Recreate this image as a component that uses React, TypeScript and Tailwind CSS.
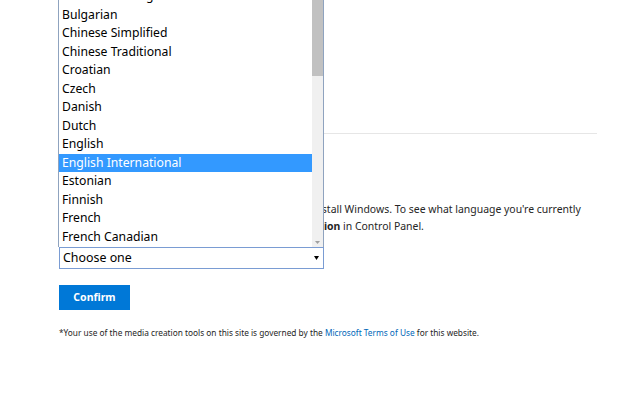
const languages = [
  'Brazilian Portuguese',
  'Bulgarian',
  'Chinese Simplified',
  'Chinese Traditional',
  'Croatian',
  'Czech',
  'Danish',
  'Dutch',
  'English',
  'English International',
  'Estonian',
  'Finnish',
  'French',
  'French Canadian',
]

const font = { fontFamily: '"Noto Sans", "Open Sans", sans-serif' }

export default function App() {
  return (
    <div className="h-[395px] w-[640px] overflow-hidden bg-white text-[#1a1a1a]" style={font}>
      <div className="ml-[59px] w-[538px]">
        {/* section above, mostly hidden behind the open list */}
        <div className="h-[133px]" />
        <div className="h-px bg-[#e6e6e6]" />
        <p className="mt-[67px] text-[10.45px] leading-[17px] whitespace-nowrap text-[#262626]">
          You&apos;ll need to choose the same language when you install Windows. To see what language you&apos;re currently
          <br />
          using, go to <b>Time and language</b> in PC settings or <b>Region</b> in Control Panel.
        </p>

        <div className="relative mt-[12px] w-[265px]">
          {/* open dropdown list */}
          <div className="absolute bottom-full left-[-1px] flex w-[266px] border-x border-[#8fa3bf] bg-white">
            <ul className="flex-1 pt-px pb-px">
              {languages.map((l) => (
                <li
                  key={l}
                  className={
                    l === 'English International'
                      ? 'h-[18.5px] pl-[3px] text-[12.2px] leading-[18.5px] text-white bg-[#3399ff]'
                      : 'h-[18.5px] pl-[3px] text-[12.2px] leading-[18.5px] text-black'
                  }
                >
                  {l}
                </li>
              ))}
            </ul>
            <div className="relative w-[11px] bg-[#f0f0f0]">
              <div className="absolute left-0 right-0 top-0 bottom-[171px] bg-[#c1c1c1]" />
              <svg className="absolute bottom-[3px] left-[3px]" width="5" height="3" viewBox="0 0 5 3">
                <path d="M0 0h5L2.5 3z" fill="#a0a0a0" />
              </svg>
            </div>
          </div>

          {/* closed select */}
          <div className="flex h-[22px] items-center justify-between border border-[#7a9cd3] bg-white pl-[3px] pr-[4px] text-[12.4px] text-black">
            <span>Choose one</span>
            <svg width="5" height="4" viewBox="0 0 5 4">
              <path d="M0 0h5L2.5 4z" fill="#000" />
            </svg>
          </div>
        </div>

        <button className="mt-[16px] h-[25px] w-[71px] bg-[#0078d7] text-[10.5px] font-bold text-white">
          Confirm
        </button>

        <p className="mt-[17px] text-[8.3px] leading-[12px] text-[#262626]">
          *Your use of the media creation tools on this site is governed by the{' '}
          <span className="text-[#0067b8]">Microsoft Terms of Use</span> for this website.
        </p>
      </div>
    </div>
  )
}
